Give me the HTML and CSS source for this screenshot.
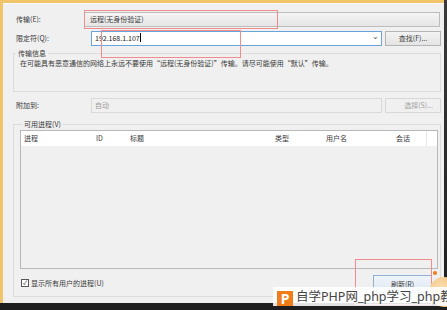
FILE: index.html
```html
<!DOCTYPE html>
<html>
  <head>
    <meta charset="UTF-8">
    <title>附加到进程</title>
    <link rel="stylesheet" href="styles.css">
  </head>
  <body>
    <div class="frame">
      <div class="window">

        <div class="row first">
          <label class="lbl w71">传输(<u>E</u>):</label>
          <div class="combo">远程(无身份验证)</div>
        </div>

        <div class="row">
          <label class="lbl w78">限定符(<u>Q</u>):</label>
          <div class="input focus">192.168.1.107<span class="caret"></span><span class="arrow">&#8964;</span></div>
          <div class="btn">查找(<u>F</u>)...</div>
        </div>

        <fieldset class="group info">
          <legend>传输信息</legend>
          <p>在可能具有恶意通信的网络上永远不要使用“远程(无身份验证)”传输。请尽可能使用“默认”传输。</p>
        </fieldset>

        <div class="row attach">
          <label class="lbl w78">附加到:</label>
          <div class="input disabled">自动</div>
          <div class="btn disabled">选择(<u>S</u>)...</div>
        </div>

        <fieldset class="group procs">
          <legend>可用进程(<u>V</u>)</legend>
          <div class="list">
            <div class="list-head">
              <span class="col c1">进程</span>
              <span class="col c2">ID</span>
              <span class="col c3">标题</span>
              <span class="col c4">类型</span>
              <span class="col c5">用户名</span>
              <span class="col c6">会话</span>
            </div>
          </div>
          <div class="foot">
            <label class="check"><span class="box">&#10003;</span>显示所有用户的进程(<u>U</u>)</label>
            <div class="btn default">刷新(<u>R</u>)</div>
          </div>
        </fieldset>

      </div>
    </div>

    <div class="mark m1"></div>
    <div class="mark m2"></div>
    <div class="mark m3"></div>

    <div class="blob"><span class="dot"></span></div>
    <div class="watermark"><span class="logo">P</span>自学PHP网_php学习_php教程</div>
  </body>
</html>
```

FILE: styles.css
```css
html, body { margin: 0; padding: 0; }
body { width: 447px; height: 310px; overflow: hidden; position: relative;
       background: linear-gradient(#3a3a3a, #1e1e1e);
       font-family: "Noto Sans CJK SC", "Microsoft YaHei", sans-serif; font-size: 7px; color: #3a3a3a; }

u { text-decoration: none; }

.frame { width: 444px; height: 303px; background-color: #f2c46a; padding: 3px 0 0 3px; box-sizing: border-box; }
.window { height: 100%; background-color: #f0f0f0; border-top: 1px solid #fafafa; box-sizing: border-box;
          padding: 8px 3px 0 10px; }

.row { display: flex; align-items: center; height: 15px; margin-top: 4px; }
.row.first { margin-top: 0; }
.lbl { flex: none; padding-left: 3px; box-sizing: border-box; line-height: 15px; }
.w71 { width: 71px; }
.w78 { width: 78px; }

.combo { flex: 1; height: 15px; margin-right: 1px; box-sizing: border-box; padding-left: 5px; line-height: 13px;
         border: 1px solid #bcbcbc; background: linear-gradient(#f4f4f4, #e6e6e6); }

.input { flex: 1; height: 15px; box-sizing: border-box; padding-left: 3px; line-height: 13px; position: relative;
         border: 1px solid #c8c8c8; background-color: #fff; margin-right: 3px; }
.input.focus { border-color: #6aa2dc; color: #222; }
.input.disabled { background-color: #f0f0f0; border-color: #dadada; color: #9a9a9a; }
.caret { display: inline-block; width: 1px; height: 9px; background-color: #000; vertical-align: -1px; }
.arrow { position: absolute; right: 2px; top: -3px; font-size: 8px; color: #555; }

.btn { flex: none; width: 56px; height: 15px; box-sizing: border-box; text-align: center; line-height: 13px;
       border: 1px solid #b4b4b4; background: linear-gradient(#f3f3f3, #e4e4e4); }
.btn.disabled { border-color: #d8d8d8; background: #f0f0f0; color: #a0a0a0; text-align: right; padding-right: 7px; }
.btn.default { width: 59px; height: 18px; line-height: 16px; border-color: #8fb2d4;
               background: linear-gradient(#eef4fa, #dfe9f3); }

.group { margin: 0; padding: 0; border: 1px solid #dcdcdc; }
.group legend { padding: 0 2px; margin-left: 2px; line-height: 12px; }
.info { margin-top: 1px; height: 45px; box-sizing: border-box; }
.info p { margin: -2px 0 0 6px; line-height: 12px; }
.attach { margin-top: 6px; }
.procs { margin-top: 5px; height: 179px; box-sizing: border-box; padding: 0 2px 0 6px; }

.list { height: 139px; border: 1px solid #b8b8b8; background-color: #f0f0f0; box-sizing: border-box; }
.list-head { display: flex; height: 15px; background-color: #fff; line-height: 15px; }
.col { flex: none; padding-left: 3px; box-sizing: border-box; }
.c1 { width: 72px; }
.c2 { width: 34px; }
.c3 { width: 145px; }
.c4 { width: 51px; }
.c5 { width: 70px; }
.c6 { width: 34px; border-right: 1px solid #e6e6e6; }

.foot { display: flex; justify-content: space-between; align-items: flex-start; margin-top: 6px; padding-right: 6px; }
.check { display: flex; align-items: center; margin-top: 3px; margin-left: 1px; line-height: 10px; }
.box { display: inline-block; width: 6px; height: 6px; border: 1px solid #555; background-color: #fff;
       font-size: 6px; line-height: 6px; text-align: center; margin-right: 2px; color: #111; }

.mark { position: absolute; border: 1px solid #f08c8c; }
.m1 { left: 84px; top: 10px; width: 192px; height: 17px; }
.m2 { left: 101px; top: 30px; width: 138px; height: 26px; }
.m3 { left: 355px; top: 259px; width: 75px; height: 44px; }

.blob { position: absolute; left: 429px; top: 277px; width: 30px; height: 30px; border-radius: 50%;
        background: radial-gradient(circle at 40% 40%, #fbe2b4, #efb46a); }
.dot { position: absolute; left: 4px; top: -6px; width: 4px; height: 4px; border-radius: 50%; background-color: #f07a1e; }

.watermark { position: absolute; left: 273px; top: 287px; width: 180px; height: 19px; line-height: 19px;
             background-color: rgba(255, 255, 255, 0.88); font-family: "Noto Sans", "Noto Sans CJK SC", sans-serif;
             font-size: 12.5px; color: #444; white-space: nowrap; overflow: hidden; }
.logo { display: inline-block; width: 16px; height: 16px; margin: 0 3px 0 4px; vertical-align: -3px; line-height: 16px;
        background-color: #f07d1a; color: #fff; font-weight: bold; font-size: 14px; text-align: center; }
```
